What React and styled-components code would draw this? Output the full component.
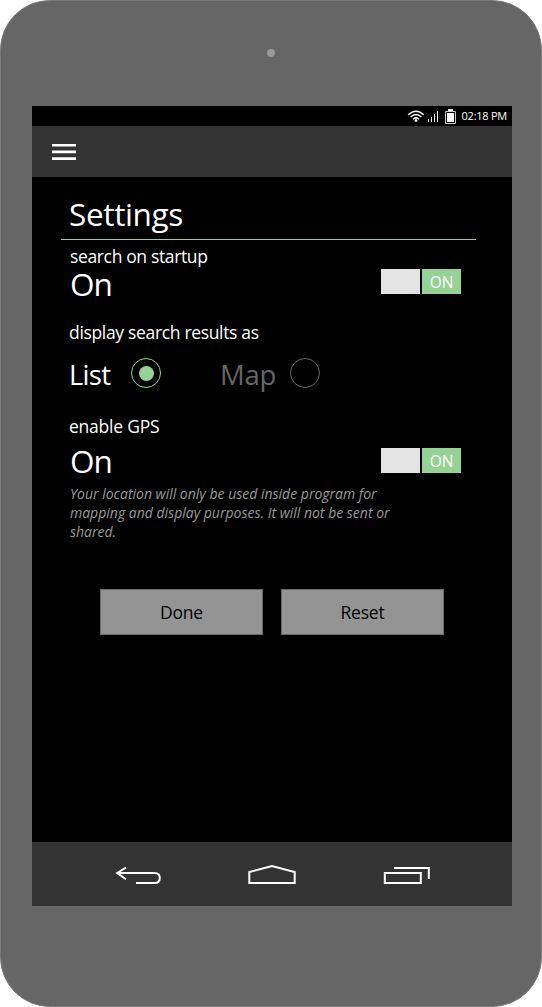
import React from 'react';
import styled, { createGlobalStyle } from 'styled-components';

const GlobalStyle = createGlobalStyle`
  *, *::before, *::after { box-sizing: border-box; }
  body {
    margin: 0;
    background: #fff;
    font-family: 'Open Sans', 'Noto Sans', sans-serif;
  }
`;

const Device = styled.div`
  width: 542px;
  height: 1007px;
  display: flex;
  flex-direction: column;
  align-items: center;
  background: #666;
  border: 1px solid #797979;
  border-radius: 50px;
`;

const Camera = styled.div`
  width: 8px;
  height: 8px;
  margin: 48px 0 49px;
  border-radius: 50%;
  background: #999;
  flex: none;
`;

const Screen = styled.div`
  width: 480px;
  height: 800px;
  margin-left: 2px;
  display: flex;
  flex-direction: column;
  background: #000;
  color: #fff;
`;

const StatusBar = styled.div`
  height: 20px;
  display: flex;
  align-items: center;
  justify-content: flex-end;
  padding-right: 5px;
`;

const StatusIcons = styled.svg`
  display: block;
  margin-right: 6px;
`;

const Clock = styled.span`
  font-size: 11px;
  line-height: 20px;
  letter-spacing: -0.25px;
`;

const AppBar = styled.header`
  height: 51px;
  padding: 0 20px;
  display: flex;
  align-items: center;
  background: #333;
`;

const MenuButton = styled.button`
  width: 24px;
  height: 17px;
  padding: 0;
  border: 0;
  background: none;
  svg { display: block; }
`;

const Content = styled.main`
  flex: 1;
  display: flex;
  flex-direction: column;
  padding: 0 36px 0 29px;
`;

const Title = styled.h1`
  margin: 0;
  height: 63px;
  padding: 17px 0 0 8px;
  border-bottom: 1px solid #96d296;
  font-size: 31.5px;
  font-weight: 400;
  line-height: 40px;
  letter-spacing: -0.35px;
`;

const Section = styled.section`
  padding-left: 8px;
  height: ${(p) => p.$height}px;
`;

const Label = styled.div`
  font-size: 17.5px;
  line-height: 22px;
  letter-spacing: ${(p) => p.$tracking}px;
  padding-top: ${(p) => p.$top}px;
  padding-left: ${(p) => p.$indent || 0}px;
`;

const SettingRow = styled.div`
  display: flex;
  justify-content: space-between;
  align-items: flex-start;
  padding-right: 15px;
  margin-top: ${(p) => p.$gap}px;
`;

const Value = styled.div`
  padding-left: 1px;
  font-size: 31.5px;
  line-height: 34px;
  letter-spacing: -1px;
`;

const Toggle = styled.div`
  display: flex;
  gap: 2px;
  margin-top: ${(p) => p.$top}px;
`;

const ToggleHalf = styled.div`
  width: 39px;
  height: 25px;
  background: ${(p) => (p.$active ? '#96d296' : '#e4e4e4')};
  font-size: 15.5px;
  line-height: 27px;
  text-align: center;
`;

const Options = styled.div`
  display: flex;
  align-items: flex-start;
  margin-top: 15px;
`;

const OptionLabel = styled.span`
  width: ${(p) => p.$width}px;
  font-size: 27.5px;
  line-height: 34px;
  letter-spacing: ${(p) => p.$tracking}px;
  color: ${(p) => (p.$active ? '#fff' : '#666')};
`;

const Radio = styled.span`
  width: 30px;
  height: 30px;
  margin-right: ${(p) => p.$gap || 0}px;
  display: flex;
  align-items: center;
  justify-content: center;
  border: 1px solid ${(p) => (p.$active ? '#96d296' : '#666')};
  border-radius: 50%;
  &::after {
    content: '';
    width: 15px;
    height: 15px;
    border-radius: 50%;
    background: ${(p) => (p.$active ? '#96d296' : 'transparent')};
  }
`;

const Note = styled.p`
  margin: 6px 0 0;
  padding-left: 1px;
  font-size: 14px;
  font-style: italic;
  line-height: 19px;
  color: #999;
  white-space: nowrap;
  span { display: block; }
`;

const Actions = styled.div`
  display: flex;
  gap: 18px;
  padding-left: 39px;
`;

const ActionButton = styled.button`
  width: 163px;
  height: 46px;
  padding: 0;
  border: 1px solid #666;
  background: #949494;
  color: #000;
  font-family: inherit;
  font-size: 17.5px;
  line-height: 24px;
  letter-spacing: -0.2px;
`;

const NavBar = styled.nav`
  height: 64px;
  padding: 2px 82px 0;
  display: flex;
  align-items: center;
  justify-content: space-between;
  background: #333;
`;

const NavIcon = styled.svg`
  display: block;
  overflow: visible;
  fill: none;
  stroke: #fff;
  stroke-width: 2;
`;

function StatusGlyphs() {
  return (
    <StatusIcons width="49" height="16" viewBox="0 0 49 16" fill="none" stroke="#fff">
      <path d="M1.2 6.8Q9 -0.4 16.8 6.8M3.6 9Q9 4 14.4 9M6 11.2Q9 8.6 12 11.2" strokeWidth="1.5" />
      <circle cx="9" cy="12.6" r="1.4" fill="#fff" stroke="none" />
      <path d="M21.5 11V14M24.5 9V14M27.5 6V14M30.5 3V14" />
      <path d="M38.5 3.5H48.5V15.5H38.5Z" stroke="#ccc" />
      <path d="M41 1H46V3H41ZM40 5H47V14H40Z" fill="#fff" stroke="none" />
    </StatusIcons>
  );
}

function Switch({ top }) {
  return (
    <Toggle $top={top}>
      <ToggleHalf />
      <ToggleHalf $active>ON</ToggleHalf>
    </Toggle>
  );
}

export default function App() {
  return (
    <>
      <GlobalStyle />
      <Device>
        <Camera />
        <Screen>
          <StatusBar>
            <StatusGlyphs />
            <Clock>02:18 PM</Clock>
          </StatusBar>
          <AppBar>
            <MenuButton aria-label="Menu">
              <svg width="24" height="17" viewBox="0 0 24 17" fill="#fff">
                <path d="M0 1H24V3.5H0ZM0 7.5H24V10.3H0ZM0 14.3H24V17H0Z" />
              </svg>
            </MenuButton>
          </AppBar>
          <Content>
            <Title>Settings</Title>
            <Section $height={80}>
              <Label $top={5} $indent={1} $tracking={-0.36}>search on startup</Label>
              <SettingRow $gap={0}>
                <Value>On</Value>
                <Switch top={2} />
              </SettingRow>
            </Section>
            <Section $height={94}>
              <Label $top={1} $tracking={-0.33}>display search results as</Label>
              <Options>
                <OptionLabel $active $width={62} $tracking={-0.75}>List</OptionLabel>
                <Radio $active $gap={59} />
                <OptionLabel $width={70} $tracking={-0.3}>Map</OptionLabel>
                <Radio />
              </Options>
            </Section>
            <Section $height={175}>
              <Label $top={1} $tracking={-0.22}>enable GPS</Label>
              <SettingRow $gap={7}>
                <Value>On</Value>
                <Switch top={4} />
              </SettingRow>
              <Note>
                <span>Your location will only be used inside program for</span>
                <span>mapping and display purposes. It will not be sent or</span>
                <span>shared.</span>
              </Note>
            </Section>
            <Actions>
              <ActionButton>Done</ActionButton>
              <ActionButton>Reset</ActionButton>
            </Actions>
          </Content>
          <NavBar>
            <NavIcon width="48" height="22" viewBox="0 0 48 22">
              <path d="M12 3.5L3.2 9L12 15.2M3.2 9H40.5Q45.8 9 45.8 14Q45.8 19 40.5 19H22" />
            </NavIcon>
            <NavIcon width="50" height="22" viewBox="0 0 50 22">
              <path d="M2.3 19V8L25 2L47.7 8V19Z" />
            </NavIcon>
            <NavIcon width="48" height="22" viewBox="0 0 48 22">
              <path d="M2.8 9H38.8V19H2.8ZM12 4H46.8V15" />
            </NavIcon>
          </NavBar>
        </Screen>
      </Device>
    </>
  );
}
